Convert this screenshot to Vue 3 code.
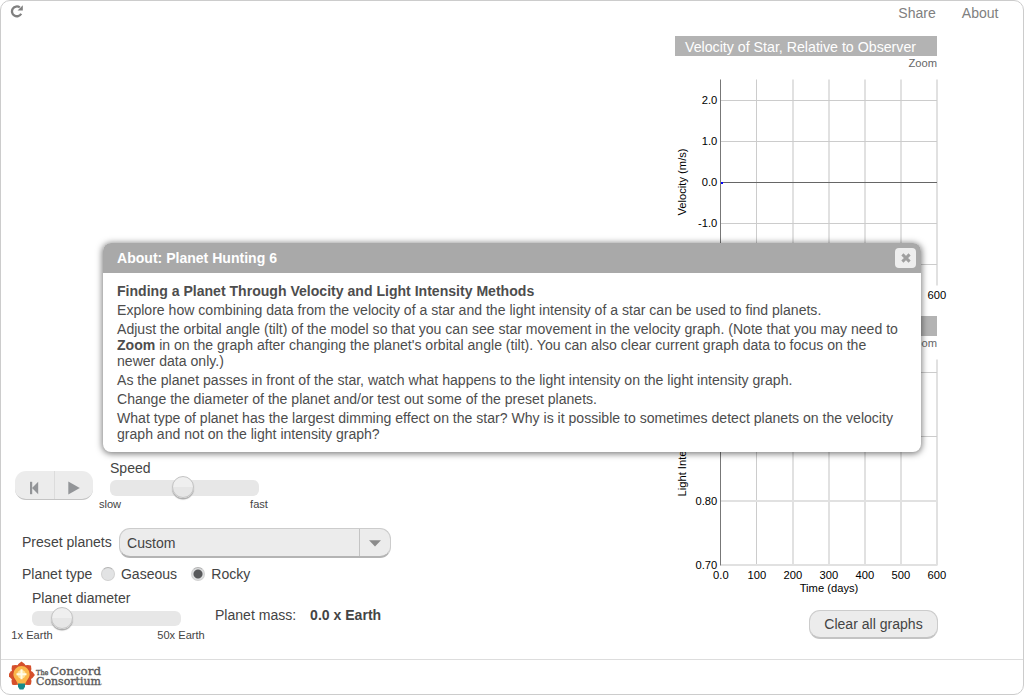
<script setup>
const xTicks = ['0.0', '100', '200', '300', '400', '500', '600']
const graphs = [
  {
    title: 'Velocity of Star, Relative to Observer',
    yLabel: 'Velocity (m/s)',
    xLabel: '',
    rows: [
      { y: 21, label: '2.0' },
      { y: 62, label: '1.0' },
      { y: 103, label: '0.0', zero: true },
      { y: 144, label: '-1.0' },
      { y: 185, label: '-2.0' }
    ],
    bottom: 206,
    point: true
  },
  {
    title: 'Light Intensity of Star',
    yLabel: 'Light Intensity',
    xLabel: 'Time (days)',
    rows: [
      { y: 13, label: '1.00' },
      { y: 77, label: '0.90' },
      { y: 141.5, label: '0.80', soft: true },
      { y: 205.5, label: '0.70', soft: true }
    ],
    bottom: 206,
    point: false
  }
]
const petals = Array.from({ length: 8 }, (_, i) => i * 45)
</script>

<template>
  <div class="frame">
    <header class="top">
      <svg class="reload" width="14" height="14" viewBox="0 0 14 14">
        <path d="M11.2 8.7A4.9 4.9 0 1 1 9.8 2.4" fill="none" stroke="#808080" stroke-width="2.3" />
        <path d="M12.8 .2V5.4H7.6z" fill="#808080" />
      </svg>
      <nav>
        <a>Share</a>
        <a>About</a>
      </nav>
    </header>

    <main>
      <section class="controls">
        <div class="row playback">
          <div class="buttons">
            <button>
              <svg width="12" height="14" viewBox="0 0 12 14">
                <path d="M1 .8h2.2v12.4H1z" fill="#939598" />
                <path d="M9.2 .8v12.4L3 7z" fill="#939598" />
              </svg>
            </button>
            <button>
              <svg width="12" height="14" viewBox="0 0 12 14">
                <path d="M.3 .6v12.8L11.8 7z" fill="#939598" />
              </svg>
            </button>
          </div>
          <div class="slider">
            <div class="name">Speed</div>
            <div class="track"><i class="knob mid"></i></div>
            <div class="ends"><span>slow</span><span>fast</span></div>
          </div>
        </div>

        <div class="row preset">
          <label>Preset planets</label>
          <div class="select">
            <span>Custom</span>
            <div class="arrow">
              <svg width="12" height="7" viewBox="0 0 12 7"><path d="M0 .3h12L6 6.5z" fill="#8b8b8b" /></svg>
            </div>
          </div>
        </div>

        <div class="row type">
          <span>Planet type</span>
          <i class="radio"></i>
          <span class="g">Gaseous</span>
          <i class="radio on"></i>
          <span>Rocky</span>
        </div>

        <div class="row diameter">
          <div class="slider">
            <div class="name">Planet diameter</div>
            <div class="track"><i class="knob low"></i></div>
            <div class="ends"><span>1x Earth</span><span>50x Earth</span></div>
          </div>
          <div class="mass">Planet mass: <b>0.0 x Earth</b></div>
        </div>
      </section>

      <section class="graphs">
        <div v-for="g in graphs" :key="g.title" class="graph">
          <h3>{{ g.title }}</h3>
          <div class="zoom">Zoom</div>
          <svg width="275" height="244" viewBox="0 0 275 244">
            <rect
              v-for="k in 6" :key="'v' + k" :x="45 + 36 * k" y="0.5"
              :width="k === 1 ? 1 : 2" :height="g.bottom" :fill="k === 1 ? '#cccccc' : '#e1e1e1'"
            />
            <template v-for="r in g.rows" :key="r.label">
              <rect
                x="46" :y="Math.floor(r.y)" width="216" :height="r.soft ? 2 : 1"
                :fill="r.zero ? '#666' : r.soft ? '#e1e1e1' : '#ccc'"
              />
              <text x="42.3" :y="r.y + 4" text-anchor="end">{{ r.label }}</text>
            </template>
            <rect x="45" y="0.5" width="1" :height="g.bottom" fill="#777" />
            <rect v-if="g.point" x="46" y="103" width="2" height="2" fill="#0000ff" />
            <text
              v-for="(t, k) in xTicks" :key="t" :x="45.9 + 36 * k" y="220" text-anchor="middle"
            >{{ t }}</text>
            <text x="154" y="233" text-anchor="middle">{{ g.xLabel }}</text>
            <text transform="translate(11 103) rotate(-90)" text-anchor="middle">{{ g.yLabel }}</text>
          </svg>
        </div>
        <button class="clear">Clear all graphs</button>
      </section>
    </main>

    <footer>
      <svg width="96" height="32" viewBox="0 0 96 32">
        <g transform="translate(12.5 15)">
          <path v-for="a in petals" :key="a" d="M-5.2-7.5Q-3.6-11.5 0-13.4Q3.6-11.5 5.2-7.5L0 0z" fill="#d5502c" :transform="`rotate(${a})`" />
          <circle r="8.6" fill="#c94727" />
          <path d="M-3.8 9.6C-3.8 6-8.2 3.7-8.2-.8A8.2 8.2 0 0 1 8.2-.8C8.2 3.7 3.8 6 3.8 9.6z" fill="#fbb64a" />
          <circle cy="-.8" r="4.2" fill="#fee29a" />
          <path d="M0-5.8V4.2M-5-.8H5" stroke="#fffbe8" stroke-width="2" />
          <path d="M-3.5 8.4H3.5V11.8L1.8 14.4H-1.8L-3.5 11.8z" fill="#168a8c" />
        </g>
        <g class="brand">
          <text x="27" y="14.6" font-size="7" textLength="12.5" lengthAdjust="spacingAndGlyphs">The</text>
          <text x="41" y="15.3" font-size="11.5" textLength="51" lengthAdjust="spacingAndGlyphs">Concord</text>
          <text x="27" y="24.6" font-size="10.5" textLength="65" lengthAdjust="spacingAndGlyphs">Consortium</text>
        </g>
        <circle cx="92.6" cy="24" r=".5" fill="#777" />
      </svg>
    </footer>

    <div class="dialog">
      <div class="bar">
        <b>About: Planet Hunting 6</b>
        <button>
          <svg width="10" height="10" viewBox="0 0 10 10">
            <path d="M1.4 1.4l7.2 7.2M8.6 1.4L1.4 8.6" stroke="#a0a0a0" stroke-width="3" />
          </svg>
        </button>
      </div>
      <div class="body">
        <p><b>Finding a Planet Through Velocity and Light Intensity Methods</b></p>
        <p>Explore how combining data from the velocity of a star and the light intensity of a star can be used to find planets.</p>
        <p>Adjust the orbital angle (tilt) of the model so that you can see star movement in the velocity graph. (Note that you may need to<br><b>Zoom</b> in on the graph after changing the planet's orbital angle (tilt). You can also clear current graph data to focus on the<br>newer data only.)</p>
        <p>As the planet passes in front of the star, watch what happens to the light intensity on the light intensity graph.</p>
        <p>Change the diameter of the planet and/or test out some of the preset planets.</p>
        <p>What type of planet has the largest dimming effect on the star? Why is it possible to sometimes detect planets on the velocity<br>graph and not on the light intensity graph?</p>
      </div>
    </div>
  </div>
</template>

<style>
body { background: #fff; overflow: hidden; }
</style>

<style scoped>
* { box-sizing: border-box; }
.frame {
  position: relative;
  width: 1024px;
  height: 695px;
  border: 1px solid #ccc;
  border-radius: 10px;
  display: flex;
  flex-direction: column;
  font-family: "Liberation Sans", Arial, sans-serif;
  font-size: 14.05px;
  line-height: 16px;
  color: #444;
  white-space: nowrap;
}
button { font: inherit; color: inherit; padding: 0; border: 0; background: none; display: flex; align-items: center; justify-content: center; }
.top { height: 25px; display: flex; justify-content: space-between; padding: 4px 24.5px 0 9px; }
.top nav { display: flex; gap: 26px; color: #808080; }
main { height: 633px; display: flex; justify-content: space-between; }
.controls { width: 420px; padding-top: 434px; }
.row { display: flex; }
.playback { padding-left: 14px; height: 52px; }
.buttons {
  display: flex; width: 78px; height: 29px; margin: 11px 17px 0 0; border-radius: 11px;
  background: #ececec; border-bottom: 1px solid #c4c4c4;
}
.buttons button { width: 39px; padding-top: 5px; }
.buttons button + button { border-left: 1px solid #dcdcdc; }
.slider { width: 149px; }
.track { height: 16px; margin-top: 4px; border-radius: 6px; background: #e7e7e7; }
.knob {
  display: block; width: 22px; height: 22px; border-radius: 50%;
  border: 1px solid #c3c3c3; background: linear-gradient(#efefef 50%, #e6e6e6 50%);
  box-shadow: 0 1.5px 1px #aaa; transform: translateY(-4px);
}
.mid { margin-left: 62px; }
.low { margin-left: 18.5px; }
.ends { display: flex; justify-content: space-between; font-size: 11.1px; }
.ends span { width: 0; display: flex; justify-content: center; }
.preset { margin-top: 16px; padding-left: 21px; align-items: center; height: 30px; }
.preset label { width: 97px; padding-bottom: 2px; }
.select {
  width: 272px; height: 30px; border: 1px solid #ccc; border-bottom: 2px solid #b4b4b4; border-radius: 11px;
  background: #ececec; display: flex; justify-content: space-between; align-items: center; padding-left: 7px;
}
.arrow { width: 31px; height: 27px; border-left: 1px solid #c4c4c4; display: flex; align-items: center; justify-content: center; padding-top: 1px; }
.type { height: 16px; margin-top: 8px; padding-left: 21px; align-items: center; }
.radio { width: 14px; height: 14px; border-radius: 50%; background: #e2e3e4; border: 1px solid #d2d2d2; border-top-color: #b4b4b4; margin: 0 6px 0 8.6px; }
.g { margin-right: 5.6px; }
.on { background: radial-gradient(circle, #58595b 4px, #dcddde 5px); }
.diameter { padding-left: 31px; margin-top: 8px; }
.diameter .track { margin-top: 4.5px; height: 15.5px; }
.diameter .ends { padding-top: 1px; }
.mass { margin: 17px 0 0 34px; }
.mass b { margin-left: 10px; }
.graphs { width: 348px; padding-top: 10px; }
.graph { width: 275px; height: 280px; }
h3 { width: 262px; height: 20px; margin: 0; padding: 3px 0 0 10px; background: #b3b3b3; color: #fff; font-weight: 400; font-size: 14.2px; line-height: 16px; }
.zoom { width: 262px; height: 23px; text-align: right; font-size: 11.2px; line-height: 15px; color: #666; }
.graph svg { display: block; font-size: 11.2px; overflow: visible; }
.graph text { fill: #000; }
.clear {
  width: 129px; height: 29px; margin: 14px 0 0 134px; border: 1px solid #ccc; border-bottom: 2px solid #c4c4c4;
  border-radius: 11px; background: #ececec;
}
footer { flex: 1; border-top: 1px solid #ddd; padding: 0 8px; }
footer svg { display: block; }
.brand { font-family: "DejaVu Serif", serif; fill: #5a5a5a; stroke: #5a5a5a; stroke-width: .35px; }
.dialog {
  position: absolute; left: 102px; top: 242px; width: 818px; height: 209px; border-radius: 8px;
  background: #fff; box-shadow: 0 1px 6px 1px rgba(0, 0, 0, .5); overflow: hidden;
}
.bar { height: 30px; background: #a9a9a9; color: #fff; display: flex; align-items: center; justify-content: space-between; padding: 0 5px 0 14px; }
.bar button { width: 21px; height: 20px; border-radius: 4px; background: #eee; padding: 0 0 0 1px; }
.body { padding: 10px 14px; color: #4d4d4d; font-size: 14.07px; }
p { margin: 0 0 3px; }
</style>
